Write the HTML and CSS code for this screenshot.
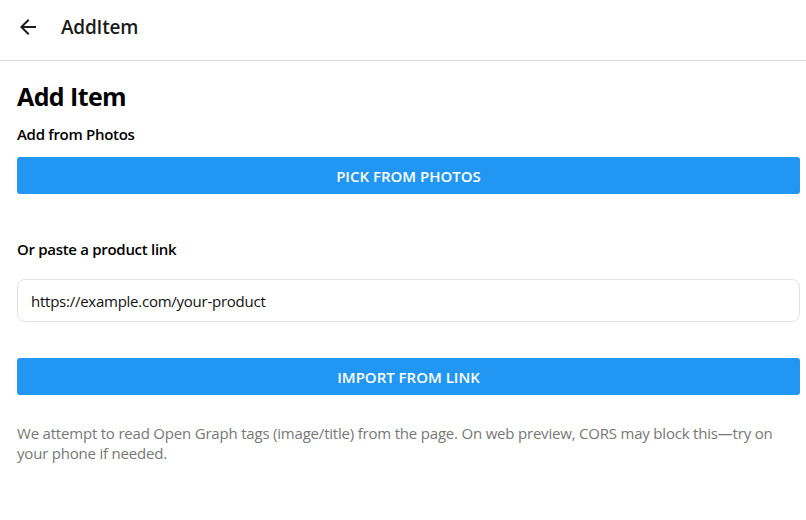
FILE: index.html
```html
<!DOCTYPE html>
<html lang="en">

<head>
    <meta charset="UTF-8">
    <meta name="viewport" content="width=device-width, initial-scale=1.0">
    <title>AddItem</title>
    <link rel="stylesheet" href="styles.css">
</head>

<body>
    <header class="top-bar">
        <button class="back-btn" aria-label="Back">
            <svg width="24" height="24" viewBox="0 0 24 24">
                <path d="M20 11H7.83l5.59-5.59L12 4l-8 8 8 8 1.41-1.41L7.83 13H20v-2z" fill="#1c1c1c"/>
            </svg>
        </button>
        <span class="top-title">AddItem</span>
    </header>

    <main class="content">
        <h1>Add Item</h1>
        <p class="label">Add from Photos</p>
        <button class="primary">PICK FROM PHOTOS</button>

        <p class="label link-label">Or paste a product link</p>
        <input type="text" class="link-input" value="https://example.com/your-product">

        <button class="primary import">IMPORT FROM LINK</button>

        <p class="note">We attempt to read Open Graph tags (image/title) from the page. On web preview, CORS may block this—try on your phone if needed.</p>
    </main>
</body>

</html>
```

FILE: styles.css
```css
body {
    margin: 0;
    font-family: "Open Sans", "Noto Sans", Arial, sans-serif;
    background-color: #fff;
    color: #000;
}

.top-bar {
    height: 61px;
    display: flex;
    align-items: center;
    padding-bottom: 7px;
    border-bottom: 1px solid #d8d8d8;
    box-sizing: border-box;
}

.back-btn {
    background: none;
    border: none;
    padding: 0;
    margin-left: 16px;
    width: 24px;
    height: 24px;
    display: flex;
    cursor: pointer;
}

.top-title {
    margin-left: 21px;
    font-size: 19px;
    font-weight: 600;
    letter-spacing: -0.2px;
    color: #1c1c1c;
}

.content {
    padding: 0 6px 0 17px;
}

h1 {
    margin: 19px 0 0;
    font-size: 25px;
    font-weight: 700;
    letter-spacing: -0.6px;
    line-height: 32px;
}

.label {
    margin: 12px 0 0;
    font-size: 15px;
    font-weight: 600;
    letter-spacing: -0.3px;
    line-height: 20px;
}

.primary {
    display: block;
    width: 100%;
    height: 37px;
    margin-top: 13px;
    background-color: #2196f3;
    color: #fff;
    border: none;
    border-radius: 3px;
    font-family: inherit;
    font-size: 15px;
    font-weight: 600;
    cursor: pointer;
}

.link-label {
    margin-top: 45px;
}

.link-input {
    display: block;
    width: 100%;
    box-sizing: border-box;
    height: 43px;
    margin-top: 20px;
    padding: 0 13px;
    border: 1px solid #e3e3e3;
    border-radius: 8px;
    font-family: inherit;
    font-size: 15px;
    letter-spacing: -0.25px;
    color: #111;
    outline: none;
}

.import {
    margin-top: 36px;
}

.note {
    margin: 28px 0 0;
    font-size: 15px;
    line-height: 20px;
    letter-spacing: -0.2px;
    color: #777;
}
```
